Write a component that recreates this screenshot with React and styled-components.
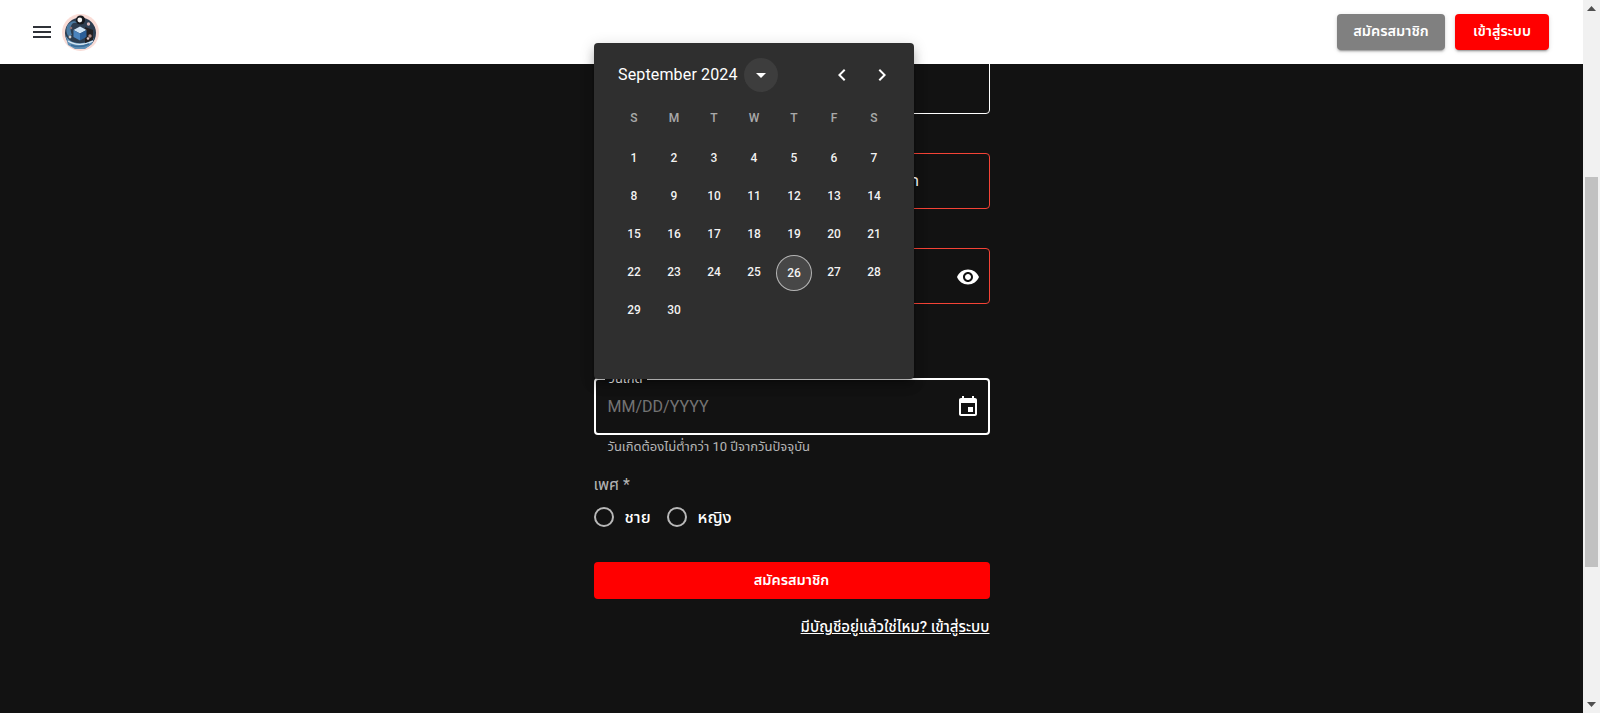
import React from "react";
import styled, { createGlobalStyle } from "styled-components";

const Global = createGlobalStyle`
  html, body { margin: 0; padding: 0; height: 713px; overflow: hidden; background: #121212; }
  body { font-family: Roboto, "Noto Sans Thai", "Noto Sans", "Liberation Sans", sans-serif; }
  button { font-family: inherit; }
  * { box-sizing: border-box; }
`;

const Page = styled.div`
  position: relative;
  display: flex;
  width: 1600px;
  height: 713px;
  overflow: hidden;
`;
const Main = styled.div`
  flex: 1;
  display: flex;
  flex-direction: column;
  min-width: 0;
  background: #121212;
`;
const Header = styled.header`
  position: relative;
  z-index: 2;
  flex: none;
  height: 64px;
  background: #fff;
  display: flex;
  align-items: center;
  padding: 0 34px 0 30px;
`;
const MenuIcon = styled.svg`
  width: 24px;
  height: 24px;
  fill: #2f3238;
  margin-right: 8px;
`;
const Logo = styled.svg`
  width: 37px;
  height: 37px;
`;
const Actions = styled.div`
  margin-left: auto;
  display: flex;
  gap: 10px;
`;
const HeadButton = styled.button`
  height: 36px;
  width: ${(p) => p.$w}px;
  border: 0;
  border-radius: 4px;
  background: ${(p) => p.$bg};
  color: #fff;
  font-size: 14.5px;
  font-weight: 600;
  box-shadow: 0 3px 1px -2px rgba(0,0,0,.2), 0 2px 2px 0 rgba(0,0,0,.14), 0 1px 5px 0 rgba(0,0,0,.12);
  padding: 0;
`;
const Form = styled.div`
  width: 396px;
  margin: 0 auto;
  display: flex;
  flex-direction: column;
  flex: 1;
  color: #fff;
`;
const Field = styled.div`
  position: relative;
  flex: none;
  height: ${(p) => p.$h || 56}px;
  margin-top: ${(p) => p.$mt}px;
  border: ${(p) => p.$bw || 1}px solid ${(p) => p.$color};
  border-radius: 4px;
  display: flex;
  align-items: center;
  justify-content: space-between;
  padding: 0 ${(p) => (p.$bw === 2 ? 8 : 9)}px 0 12px;
  font-size: 16px;
`;
const FieldText = styled.span`
  white-space: nowrap;
  margin-left: ${(p) => p.$ml || 0}px;
  color: ${(p) => p.$color || "#fff"};
`;
const Notch = styled.span`
  position: absolute;
  left: 9px;
  top: -8px;
  padding: 0 4px;
  background: #121212;
  font-size: 13px;
  line-height: 14px;
  color: #fff;
`;
const Adornment = styled.svg`
  width: 24px;
  height: 24px;
  fill: #fff;
  margin-left: auto;
  margin-top: ${(p) => p.$mt || 0}px;
`;
const Helper = styled.div`
  margin: 5px 0 0 14px;
  font-size: 13px;
  line-height: 14px;
  color: rgba(255,255,255,.7);
`;
const GenderLabel = styled.div`
  margin-top: 21px;
  font-size: 16px;
  line-height: 20px;
  color: rgba(255,255,255,.7);
`;
const RadioRow = styled.div`
  margin-top: 10px;
  display: flex;
  align-items: center;
  height: 24px;
`;
const RadioCircle = styled.span`
  width: 20px;
  height: 20px;
  border-radius: 50%;
  border: 2px solid rgba(255,255,255,.7);
  flex: none;
`;
const RadioLabel = styled.span`
  margin: 0 16px 0 11px;
  font-size: 16.5px;
  font-weight: 500;
  color: #fff;
`;
const Submit = styled.button`
  margin-top: 33px;
  height: 37px;
  border: 0;
  border-radius: 4px;
  background: #f00;
  color: #fff;
  font-size: 14.5px;
  font-weight: 600;
  padding: 0;
`;
const LoginLink = styled.a`
  align-self: flex-end;
  margin-top: 18px;
  font-size: 15px;
  font-weight: 500;
  line-height: 20px;
  color: #fff;
  text-decoration: underline;
`;
const Scrollbar = styled.div`
  flex: none;
  width: 17px;
  background: #f1f1f1;
  display: flex;
  flex-direction: column;
  align-items: center;
  justify-content: space-between;
  position: relative;
  z-index: 3;
`;
const ScrollArrow = styled.svg`
  flex: none;
  width: 17px;
  height: 17px;
  fill: ${(p) => p.$fill};
`;
const ScrollTrack = styled.div`
  flex: 1;
  width: 100%;
  padding: 160px 2px 129px;
  display: flex;
`;
const Thumb = styled.div`
  flex: 1;
  background: #c1c1c1;
`;
const Popover = styled.div`
  position: absolute;
  z-index: 5;
  left: 594px;
  top: 43px;
  width: 320px;
  height: 336px;
  background: #2f2f2f;
  border-radius: 4px;
  color: #fff;
  box-shadow: 0 5px 5px -3px rgba(0,0,0,.2), 0 8px 10px 1px rgba(0,0,0,.14), 0 3px 14px 2px rgba(0,0,0,.12);
  padding: 0 20px;
`;
const CalHead = styled.div`
  height: 64px;
  display: flex;
  align-items: center;
  padding-left: 4px;
`;
const MonthLabel = styled.span`
  font-size: 16px;
  font-weight: 400;
  letter-spacing: .15px;
  line-height: 22px;
  margin-top: -1px;
  color: #fff;
`;
const RoundButton = styled.span`
  width: 34px;
  height: 34px;
  margin-left: 6px;
  border-radius: 50%;
  background: ${(p) => (p.$filled ? "#3d3d3d" : "transparent")};
  display: flex;
  align-items: center;
  justify-content: center;
`;
const NavGroup = styled.div`
  margin-left: auto;
  margin-right: -5px;
  display: flex;
`;
const NavIcon = styled.svg`
  width: 24px;
  height: 24px;
  fill: #fff;
`;
const WeekRow = styled.div`
  display: grid;
  grid-template-columns: repeat(7, 40px);
  height: 42px;
  margin-top: -10px;
`;
const Grid = styled.div`
  display: grid;
  grid-template-columns: repeat(7, 40px);
  grid-auto-rows: 38px;
`;
const Weekday = styled.div`
  display: flex;
  align-items: center;
  justify-content: center;
  font-size: 12px;
  font-weight: 500;
  color: rgba(255,255,255,.6);
`;
const Day = styled.div`
  display: flex;
  align-items: center;
  justify-content: center;
  font-size: 12px;
  font-weight: 500;
  color: rgba(255,255,255,.95);
`;
const Today = styled.span`
  width: 36px;
  height: 36px;
  border-radius: 50%;
  border: 1px solid rgba(255,255,255,.6);
  background: #474747;
  display: flex;
  align-items: center;
  justify-content: center;
  transform: translateY(1px);
`;

const weekdays = ["S", "M", "T", "W", "T", "F", "S"];
const days = Array.from({ length: 30 }, (_, i) => i + 1);

function LogoArt() {
  return (
    <Logo viewBox="0 0 37 37">
      <circle cx="18.5" cy="18.5" r="18.5" fill="#f9dcd6" />
      <circle cx="18.5" cy="19" r="15.5" fill="#2c3d50" />
      <path d="M3 20c3 7 10 10 17 9 5-.5 9-2 12-5l-2 6-7 5H13l-7-4z" fill="#5f8fb6" />
      <path d="M5 12c3-5 8-6 10-3-3-1-5 0-6 3s0 7 1 9l-4 1c-2-3-2-7-1-10z" fill="#4c7ca4" />
      <path d="M23 13l8 3v10l-8 3z" fill="#231f21" />
      <path d="M6 27c6 4 16 5 25 0" stroke="#dbe8f2" strokeWidth="1.2" fill="none" />
      <path d="M9 31c5 2 12 2 18-1" stroke="#3a6c98" strokeWidth="1.4" fill="none" />
      <circle cx="18.5" cy="6" r="4.6" fill="#16181c" />
      <circle cx="17.8" cy="6" r="2.4" fill="#f4f4f4" />
      <path d="M18 12.5l6.5 3.5-6.5 3.5L11.5 16z" fill="#cfe3f5" />
      <path d="M11.5 16l6.5 3.5v7L11.5 23z" fill="#4a83bd" />
      <path d="M24.5 16L18 19.5v7l6.5-3.5z" fill="#2b5e98" />
      <circle cx="28" cy="22" r="1.7" fill="#b58d86" />
      <circle cx="26" cy="24.5" r="1.3" fill="#e0c7c2" />
      <circle cx="26.5" cy="10" r="1.7" fill="#d7b6b8" />
      <circle cx="8" cy="23" r="1.4" fill="#d5cdc9" />
      <circle cx="9" cy="14" r="1.3" fill="#8a6f73" />
    </Logo>
  );
}

export default function App() {
  return (
    <Page>
      <Global />
      <Main>
        <Header>
          <MenuIcon viewBox="0 0 24 24">
            <path d="M3 18h18v-2H3zm0-5h18v-2H3zm0-7v2h18V6z" />
          </MenuIcon>
          <LogoArt />
          <Actions>
            <HeadButton $w={108} $bg="#808080">สมัครสมาชิก</HeadButton>
            <HeadButton $w={94} $bg="#ff0000">เข้าสู่ระบบ</HeadButton>
          </Actions>
        </Header>
        <Form>
          <Field $mt={-6} $color="#fff" />
          <Field $mt={39} $color="#f44336">
            <FieldText $ml={303}>ก</FieldText>
          </Field>
          <Field $mt={39} $color="#f44336">
            <Adornment $mt={1} viewBox="0 0 24 24">
              <path d="M12 4.5C7 4.5 2.73 7.61 1 12c1.73 4.39 6 7.5 11 7.5s9.27-3.11 11-7.5c-1.73-4.39-6-7.5-11-7.5zM12 17c-2.76 0-5-2.24-5-5s2.24-5 5-5 5 2.24 5 5-2.24 5-5 5zm0-8c-1.66 0-3 1.34-3 3s1.34 3 3 3 3-1.34 3-3-1.34-3-3-3z" />
            </Adornment>
          </Field>
          <Field $mt={74} $h={57} $bw={2} $color="#fff">
            <Notch>วันเกิด</Notch>
            <FieldText $color="rgba(255,255,255,.42)">MM/DD/YYYY</FieldText>
            <Adornment $mt={1} viewBox="0 0 24 24">
              <path d="M17 12h-5v5h5v-5zM16 1v2H8V1H6v2H5c-1.11 0-1.99.9-1.99 2L3 19c0 1.1.89 2 2 2h14c1.1 0 2-.9 2-2V5c0-1.1-.9-2-2-2h-1V1h-2zm3 18H5V8h14v11z" />
            </Adornment>
          </Field>
          <Helper>วันเกิดต้องไม่ต่ำกว่า 10 ปีจากวันปัจจุบัน</Helper>
          <GenderLabel>เพศ *</GenderLabel>
          <RadioRow>
            <RadioCircle />
            <RadioLabel>ชาย</RadioLabel>
            <RadioCircle />
            <RadioLabel>หญิง</RadioLabel>
          </RadioRow>
          <Submit>สมัครสมาชิก</Submit>
          <LoginLink>มีบัญชีอยู่แล้วใช่ไหม? เข้าสู่ระบบ</LoginLink>
        </Form>
      </Main>
      <Scrollbar>
        <ScrollArrow $fill="#505050" viewBox="0 0 17 17">
          <path d="M4 11l4.5-5 4.5 5z" />
        </ScrollArrow>
        <ScrollTrack>
          <Thumb />
        </ScrollTrack>
        <ScrollArrow $fill="#505050" viewBox="0 0 17 17">
          <path d="M4 6l4.5 5 4.5-5z" />
        </ScrollArrow>
      </Scrollbar>
      <Popover>
        <CalHead>
          <MonthLabel>September 2024</MonthLabel>
          <RoundButton $filled>
            <NavIcon viewBox="0 0 24 24">
              <path d="m7 10 5 5 5-5z" />
            </NavIcon>
          </RoundButton>
          <NavGroup>
            <RoundButton>
              <NavIcon viewBox="0 0 24 24">
                <path d="M15.41 7.41 14 6l-6 6 6 6 1.41-1.41L10.83 12z" />
              </NavIcon>
            </RoundButton>
            <RoundButton>
              <NavIcon viewBox="0 0 24 24">
                <path d="M10 6 8.59 7.41 13.17 12l-4.58 4.59L10 18l6-6z" />
              </NavIcon>
            </RoundButton>
          </NavGroup>
        </CalHead>
        <WeekRow>
          {weekdays.map((d, i) => (
            <Weekday key={i}>{d}</Weekday>
          ))}
        </WeekRow>
        <Grid>
          {days.map((d) => (
            <Day key={d}>{d === 26 ? <Today>{d}</Today> : d}</Day>
          ))}
        </Grid>
      </Popover>
    </Page>
  );
}
